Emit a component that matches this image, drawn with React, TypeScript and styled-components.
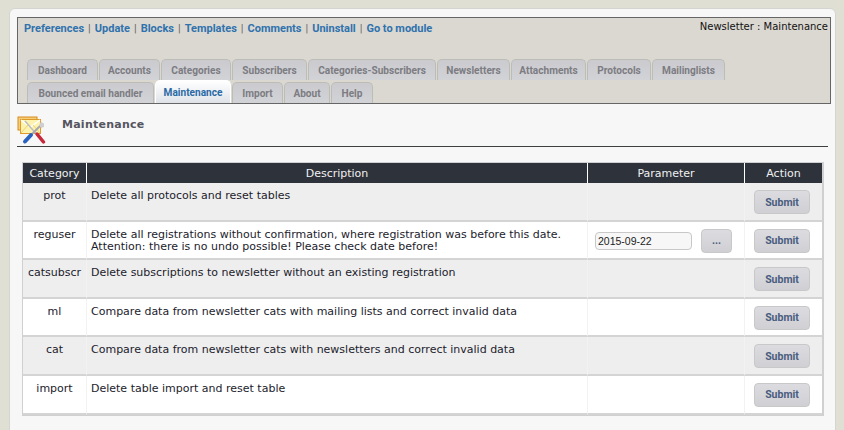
import React from "react";
import styled, {createGlobalStyle} from "styled-components";

const GlobalStyle = createGlobalStyle`
  html, body {
    margin: 0;
    padding: 0;
    height: 430px;
    overflow: hidden;
    background: #e0dfd3;
    font-family: "DejaVu Sans", Verdana, sans-serif;
    font-size: 11px;
    color: #1a1a2a;
  }
`;

const Page = styled.div`
  box-sizing: border-box;
  margin: 8px 8px 0 9px;
  height: 430px;
  padding: 8px 5px 0 7px;
  background: #f7f7f7;
  border: 1px solid #d4d4d0;
  border-radius: 6px;
  overflow: hidden;
`;

const ModuleHeader = styled.div`
  box-sizing: border-box;
  height: 87px;
  width: 814px;
  background: #dbd8d1;
  border: 1px solid #666;
  display: flex;
  flex-direction: column;
`;

const TopBar = styled.div`
  display: flex;
  justify-content: space-between;
  height: 40px;
`;

const Links = styled.div`
  padding: 4px 0 0 6px;
  font-family: Roboto, "Liberation Sans", sans-serif;
  font-size: 11px;
  line-height: 13px;
  color: #555;
`;

const ModuleLink = styled.a`
  color: #2f72ad;
  font-weight: bold;
  text-decoration: none;
`;

const Sep = styled.span`
  margin: 0 4px;
  color: #666;
`;

const Crumb = styled.div`
  padding: 2px 2px 0 0;
  font-size: 10px;
  line-height: 13px;
  color: #111;
`;

const TabArea = styled.div`
  display: flex;
  flex-direction: column;
  gap: 1px;
  margin-left: 9px;
`;

const TabRow = styled.div`
  display: flex;
  gap: 1px;
  height: 22px;
  align-items: flex-end;
`;

const Tab = styled.a<{$active?: boolean; $w: number}>`
  box-sizing: border-box;
  width: ${p => p.$w}px;
  height: ${p => (p.$active ? 23 : 21)}px;
  display: flex;
  align-items: center;
  justify-content: center;
  font-family: Roboto, "Liberation Sans", sans-serif;
  font-size: 10.1px;
  font-weight: bold;
  color: ${p => (p.$active ? "#2a6aa5" : "#7c7c82")};
  background: ${p => (p.$active ? "linear-gradient(#fff, #dfe3e8)" : "linear-gradient(#cbcbcf, #d2d3d7)")};
  border: 1px solid ${p => (p.$active ? "#fff" : "#bdbdb8")};
  border-bottom: none;
  border-radius: 5px 5px 0 0;
`;

const TitleRow = styled.div`
  box-sizing: border-box;
  width: 811px;
  height: 43px;
  display: flex;
  align-items: flex-start;
  border-bottom: 1px solid #3c4040;
`;

const IconBox = styled.div`
  width: 45px;
  height: 32px;
  padding-top: 12px;
`;

const Title = styled.h1`
  margin: 14px 0 0 0;
  font-size: 11px;
  line-height: 14px;
  letter-spacing: 0.25px;
  font-weight: bold;
  color: #55555f;
`;

const Grid = styled.table`
  margin: 15px 0 0 5px;
  width: 801px;
  table-layout: fixed;
  border-collapse: separate;
  border-spacing: 0;
  border: 1px solid #d0d0d0;
  border-right-width: 2px;
  background: #fff;
`;

const HeadCell = styled.th`
  height: 20px;
  padding: 0;
  background: #2e323b;
  color: #f0f0f0;
  font-size: 11px;
  font-weight: normal;
  text-align: center;
  border-left: 1px solid #fff;

  &:first-child {
    border-left: none;
  }
`;

const Row = styled.tr<{$odd: boolean}>`
  background: ${p => (p.$odd ? "#eeeeee" : "#ffffff")};
`;

const Cell = styled.td`
  box-sizing: border-box;
  height: 38.6px;
  padding: 7px 4px 0 4px;
  vertical-align: top;
  font-size: 11px;
  line-height: 12px;
  color: #1c1c2c;
  border-left: 1px solid #f2f2f2;
  border-bottom: 2px solid #d4d4d4;

  &:first-child {
    border-left: none;
  }
`;

const CategoryCell = styled(Cell)`
  text-align: center;
  padding-left: 0;
  padding-right: 0;
`;

const ParamCell = styled(Cell)`
  padding: 7px 0 0 7px;
`;

const ActionCell = styled(Cell)`
  padding: 7px 0 0 9px;
`;

const ParamGroup = styled.div`
  display: flex;
  align-items: center;
  gap: 9px;
`;

const DateInput = styled.input`
  box-sizing: border-box;
  width: 97px;
  height: 18px;
  padding: 0 2px;
  background: #f7f7f7;
  border: 1px solid #c8c8c8;
  border-radius: 4px;
  font-family: "Liberation Sans", Arial, sans-serif;
  font-size: 10.5px;
  color: #222;
`;

const Button = styled.button<{$w: number}>`
  box-sizing: border-box;
  width: ${p => p.$w}px;
  height: 24px;
  padding: 0;
  background: linear-gradient(#dcdce0, #cfcfd4);
  border: 1px solid #c8c8c8;
  border-radius: 4px;
  font-family: Roboto, "Liberation Sans", sans-serif;
  font-size: 10.5px;
  font-weight: bold;
  color: #4a5c80;
`;

const MaintenanceIcon = () => (
    <svg width="30" height="30" viewBox="0 0 30 30">
        <rect x="1" y="1" width="19" height="13" fill="#f5cf78" stroke="#d98a1e"/>
        <rect x="3.5" y="3.5" width="20" height="14" fill="#fdf2ae" stroke="#e09a2a"/>
        <path d="M4 4 L13.5 11 L23 4" fill="none" stroke="#fff" strokeWidth="1.5"/>
        <path d="M4 17 L11 9 M23 17 L16 9" fill="none" stroke="#ecd272" strokeWidth="1"/>
        <path d="M8 5 L22 21" stroke="#bdbdbd" strokeWidth="1.5"/>
        <path d="M20 18 L26.5 26" stroke="#c8283a" strokeWidth="3.5" strokeLinecap="round"/>
        <path d="M24 9 L14 19" stroke="#a8a8ac" strokeWidth="2"/>
        <path d="M14 19 L8 25.5" stroke="#2a62c0" strokeWidth="4" strokeLinecap="round"/>
        <path d="M24 6 l3 1.5 0 3.5 -3 1 -2 -3 z" fill="#cfcfd2"/>
    </svg>
);

const topLinks = ["Preferences", "Update", "Blocks", "Templates", "Comments", "Uninstall", "Go to module"];

const tabRows: [string, number][][] = [
    [["Dashboard", 71], ["Accounts", 61], ["Categories", 70], ["Subscribers", 75], ["Categories-Subscribers", 128], ["Newsletters", 73], ["Attachments", 75], ["Protocols", 64], ["Mailinglists", 73]],
    [["Bounced email handler", 127], ["Maintenance", 76], ["Import", 51], ["About", 46], ["Help", 42]],
];

const actions = [
    {category: "prot", lines: ["Delete all protocols and reset tables"]},
    {category: "reguser", lines: ["Delete all registrations without confirmation, where registration was before this date.", "Attention: there is no undo possible! Please check date before!"], date: "2015-09-22"},
    {category: "catsubscr", lines: ["Delete subscriptions to newsletter without an existing registration"]},
    {category: "ml", lines: ["Compare data from newsletter cats with mailing lists and correct invalid data"]},
    {category: "cat", lines: ["Compare data from newsletter cats with newsletters and correct invalid data"]},
    {category: "import", lines: ["Delete table import and reset table"]},
];

const App: React.FC = () => (
    <Page>
        <GlobalStyle/>
        <ModuleHeader>
            <TopBar>
                <Links>
                    {topLinks.map((link, i) => (
                        <React.Fragment key={link}>
                            {i > 0 && <Sep>|</Sep>}
                            <ModuleLink>{link}</ModuleLink>
                        </React.Fragment>
                    ))}
                </Links>
                <Crumb>Newsletter : Maintenance</Crumb>
            </TopBar>
            <TabArea>
                {tabRows.map((row, i) => (
                    <TabRow key={i}>
                        {row.map(([label, w]) => (
                            <Tab key={label} $w={w} $active={label === "Maintenance"}>{label}</Tab>
                        ))}
                    </TabRow>
                ))}
            </TabArea>
        </ModuleHeader>
        <TitleRow>
            <IconBox><MaintenanceIcon/></IconBox>
            <Title>Maintenance</Title>
        </TitleRow>
        <Grid>
            <colgroup>
                <col width="63"/>
                <col width="501"/>
                <col width="157"/>
                <col width="78"/>
            </colgroup>
            <thead>
                <tr>
                    <HeadCell>Category</HeadCell>
                    <HeadCell>Description</HeadCell>
                    <HeadCell>Parameter</HeadCell>
                    <HeadCell>Action</HeadCell>
                </tr>
            </thead>
            <tbody>
                {actions.map((a, i) => (
                    <Row key={a.category} $odd={i % 2 === 0}>
                        <CategoryCell>{a.category}</CategoryCell>
                        <Cell>{a.lines.map(l => <div key={l}>{l}</div>)}</Cell>
                        <ParamCell>
                            {a.date && (
                                <ParamGroup>
                                    <DateInput defaultValue={a.date}/>
                                    <Button $w={31}>...</Button>
                                </ParamGroup>
                            )}
                        </ParamCell>
                        <ActionCell><Button $w={56}>Submit</Button></ActionCell>
                    </Row>
                ))}
            </tbody>
        </Grid>
    </Page>
);

export default App;
